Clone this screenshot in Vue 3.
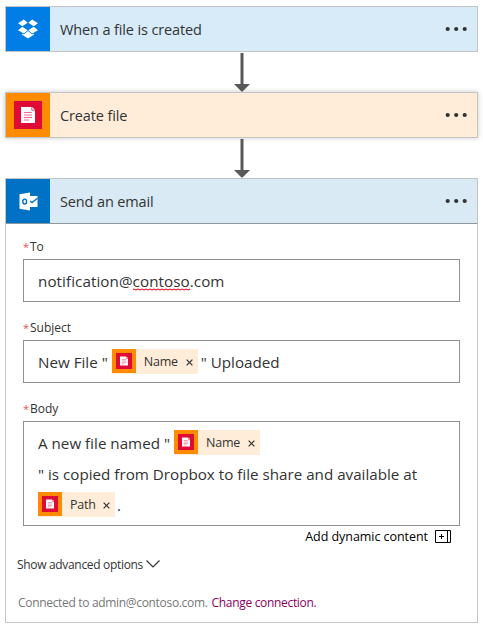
<script setup>
import { h } from 'vue'

const steps = [
  { id: 'dropbox', title: 'When a file is created' },
  { id: 'file', title: 'Create file' },
  { id: 'mail', title: 'Send an email' }
]

const FileGlyph = () =>
  h('svg', { class: 'glyph', viewBox: '0 0 28 28' }, [
    h('rect', { width: 28, height: 28, fill: '#e00a37' }),
    h('path', { d: 'M7 6h10.500v3.500H21V22H7z', fill: '#fff' }),
    h('path', { d: 'M18.200 6L21 8.800h-2.800z', fill: '#fff' }),
    h('path', { d: 'M10 11.500h8M10 14h8M10 16.500h8M10 19h5', stroke: '#ec6c87', 'stroke-width': 1.1 })
  ])

const Token = (props) =>
  h('span', { class: 'token' }, [
    h('span', { class: 'token-icon' }, [h(FileGlyph)]),
    h('span', { class: 'token-name' }, props.name),
    h('svg', { class: 'token-x', viewBox: '0 0 7 7' }, [
      h('path', { d: 'M.6.6l5.800 5.800M6.400.6L.6 6.400', stroke: '#333', 'stroke-width': 1.2 })
    ])
  ])
Token.props = ['name']
</script>

<template>
  <main class="flow">
    <template v-for="(step, i) in steps" :key="step.id">
      <svg v-if="i" class="arrow" viewBox="0 0 16 40">
        <path d="M6.500 1h3v31H16l-7.500 7.500h-1L0 32h6.500z" fill="#595959" />
      </svg>
      <section class="card" :class="step.id">
        <header class="head">
          <span class="icon">
            <svg v-if="step.id === 'dropbox'" width="20" height="20" viewBox="0 0 20 20" fill="#fff">
              <path d="M5.800.5L9.700 3.700 4.300 7.300 0 4.200zM14.200.5L10.300 3.700l5.400 3.600L20 4.200zM0 11.300l4.300-3.600L9.700 11.300l-3.900 3.300zM20 11.300l-4.300-3.600L10.300 11.300l3.900 3.300zM10 12.100l4.200 3.500 1.700-1.100v1.300L10 19.500l-5.900-3.700v-1.300l1.700 1.100z" />
            </svg>
            <FileGlyph v-else-if="step.id === 'file'" />
            <svg v-else width="19" height="19" viewBox="0 0 19 19">
              <path d="M11 4h7.500v11H11z" fill="#fff" />
              <path d="M11 9l2 1.600 5.500-4.400" fill="none" stroke="#0072c6" stroke-width="1.300" />
              <path d="M.5 2.300L11 .5v18L.5 16.700z" fill="#fff" />
              <ellipse cx="5.700" cy="9.600" rx="1.900" ry="2.500" fill="none" stroke="#0072c6" stroke-width="1.400" />
            </svg>
          </span>
          <h1 class="title">{{ step.title }}</h1>
          <svg class="dots" width="22" height="6" viewBox="0 0 22 6" fill="#333">
            <circle cx="2.700" cy="3" r="2.100" /><circle cx="11.200" cy="3" r="2.100" /><circle cx="19.700" cy="3" r="2.100" />
          </svg>
        </header>
        <div v-if="step.id === 'mail'" class="body">
          <div class="label"><i>*</i><span>To</span></div>
          <div class="field">
            <div class="line"><span class="address">notification@<span class="typo">contoso<svg class="wave" viewBox="0 0 57 3" preserveAspectRatio="none"><path d="M0 2l1-1 2 1 2-1 2 1 2-1 2 1 2-1 2 1 2-1 2 1 2-1 2 1 2-1 2 1 2-1 2 1 2-1 2 1 2-1 2 1 2-1 2 1 2-1 2 1 2-1 2 1 2-1 2 1 2-1" fill="none" stroke="#e81123" /></svg></span>.com</span></div>
          </div>
          <div class="label"><i>*</i><span>Subject</span></div>
          <div class="field">
            <div class="line"><span class="before">New File "</span><Token name="Name" /><span class="after">" Uploaded</span></div>
          </div>
          <div class="label"><i>*</i><span>Body</span></div>
          <div class="field tall">
            <div class="line"><span class="before">A new file named "</span><Token name="Name" /></div>
            <div class="line"><span>" is copied from Dropbox to file share and available at</span></div>
            <div class="line"><Token name="Path" class="path" /><span class="dot">.</span></div>
          </div>
          <div class="dynamic">
            <span>Add dynamic content</span>
            <svg width="16" height="13" viewBox="0 0 16 13" fill="none" stroke="#000">
              <path d="M.5.5h15v12H.5zM12.500.5v12M4 6.500h5M6.500 4v5" />
            </svg>
          </div>
          <div class="advanced">
            <span>Show advanced options</span>
            <svg width="14" height="8" viewBox="0 0 14 8"><path d="M.5.5L7 7 13.500.5" fill="none" stroke="#333" stroke-width="1.200" /></svg>
          </div>
          <div class="connection"><span>Connected to admin@contoso.com.</span><a>Change connection.</a></div>
        </div>
      </section>
    </template>
  </main>
</template>

<style>
body { background: #fff; }
.glyph { display: block; width: 28px; height: 28px; }
.token { display: flex; width: 86px; height: 25px; background: #ffedda; flex: none; align-items: center; box-sizing: border-box; }
.token.path { width: 77px; }
.token-icon { width: 24px; height: 24px; padding: 4px; box-sizing: border-box; background: #ff8c00; align-self: flex-start; }
.token-icon .glyph { width: 16px; height: 16px; }
.token-name { margin-left: 8px; font-size: 12.5px; line-height: 25px; flex: 1; letter-spacing: -0.2px; }
.token-x { width: 7px; height: 7px; margin: 2px 5px 0 0; }
</style>

<style scoped>
.flow { display: flex; flex-direction: column; width: 473px; padding: 6px 0 0 5px; font-family: "Open Sans", "Noto Sans", sans-serif; color: #333; }
.card { box-sizing: border-box; border: 1px solid #c4c4c4; }
.card.file { box-shadow: 0 0 5px rgba(0, 0, 0, .22); }
.card.mail { height: 445px; }
.arrow { width: 16px; height: 40px; margin-left: 229px; display: block; }
.head { height: 44px; display: flex; align-items: center; background: #d8ebf9; }
.file .head { background: #ffedda; }
.mail .head { background: #d9eaf5; border-bottom: 1px solid #8e979c; }
.icon { width: 44px; height: 44px; display: grid; place-items: center; background: #007ee5; }
.file .icon { background: #ff8c00; }
.mail .icon { background: #0072c6; }
.title { flex: 1; margin: 2px 0 0 10px; font-size: 14.500px; font-weight: 400; line-height: 20px; letter-spacing: -0.13px; white-space: nowrap; }
.dots { margin: 0 10px 0 0; }
.body { padding: 13px 17px 0; }
.label { display: flex; height: 20px; margin-bottom: 2px; line-height: 20px; font-size: 12px; }
.label i { width: 7px; color: #e0584f; font-style: normal; font-size: 11px; }
.field { box-sizing: border-box; width: 437px; height: 43px; border: 1px solid #919191; padding: 5px 14px; margin-bottom: 16px; }
.field.tall { height: 105px; margin-bottom: 0; }
.line { display: flex; align-items: center; height: 31px; font-size: 15.200px; white-space: pre; }
.address { letter-spacing: 0.07px; }
.typo { position: relative; }
.wave { position: absolute; left: 0; bottom: 0; width: 100%; height: 3px; }
.before { margin-right: 4px; }
.after { margin-left: 3px; }
.dot { margin-left: 2px; }
.dynamic { display: flex; justify-content: flex-end; align-items: center; gap: 7px; height: 20px; margin-right: 9px; color: #000; font-size: 12.5px; letter-spacing: -0.05px; }
.advanced { display: flex; align-items: center; gap: 3px; height: 20px; margin: 8px 0 0 -6px; font-size: 12px; letter-spacing: -0.32px; }
.connection { display: flex; gap: 4px; height: 20px; line-height: 20px; margin: 19px 0 0 -5px; font-size: 12px; letter-spacing: -0.32px; color: #777; }
.connection a { color: #8b0061; }
</style>
